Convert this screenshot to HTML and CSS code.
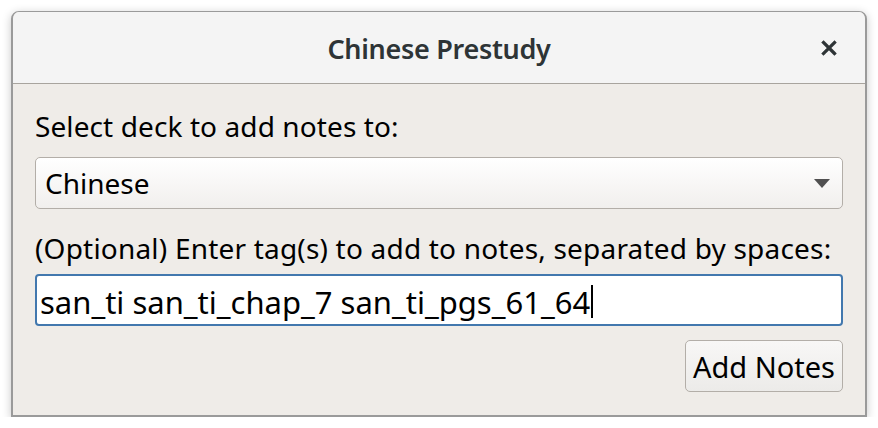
FILE: index.html
```html
<!DOCTYPE html>
<html>
<head>
<meta charset="utf-8">
<link rel="stylesheet" href="styles.css">
</head>
<body>
<div class="window">
  <div class="titlebar">
    <span class="title">Chinese Prestudy</span>
    <span class="close">
      <svg width="16" height="16" viewBox="0 0 16 16"><path d="M2.5 2.5 L13.5 13.5 M13.5 2.5 L2.5 13.5" stroke="#2e3436" stroke-width="3.2" stroke-linecap="square" fill="none"/></svg>
    </span>
  </div>
  <div class="content">
    <div class="label">Select deck to add notes to:</div>
    <div class="combo">
      <span class="combo-text">Chinese</span>
      <svg class="arrow" width="16" height="9" viewBox="0 0 16 9"><path d="M0 0 L16 0 L8 9 Z" fill="#505050"/></svg>
    </div>
    <div class="label label2">(Optional) Enter tag(s) to add to notes, separated by spaces:</div>
    <div class="entry"><span class="entry-text">san_ti san_ti_chap_7 san_ti_pgs_61_64</span><span class="cursor"></span></div>
    <div class="actions">
      <div class="button">Add Notes</div>
    </div>
  </div>
</div>
</body>
</html>
```

FILE: styles.css
```css
html, body {
  margin: 0;
  padding: 0;
  background: #ffffff;
}
body {
  padding: 11px 0 0 11px;
  font-family: "Noto Sans", "DejaVu Sans", sans-serif;
}
.window {
  width: 852px;
  height: 403px;
  border: 1px solid #9a9a9a;
  border-left-width: 2px;
  border-right-width: 2px;
  border-bottom-width: 2px;
  border-radius: 8px 8px 0 0;
  box-shadow: 0 2px 10px rgba(0,0,0,0.22);
  background: #efece8;
  display: flex;
  flex-direction: column;
  overflow: hidden;
}
.titlebar {
  height: 71px;
  background: #f4f4f4;
  border-bottom: 1px solid #a8a49e;
  display: flex;
  align-items: center;
  justify-content: center;
  position: relative;
  flex: none;
}
.title {
  font-family: "Noto Sans", sans-serif;
  font-weight: 600;
  font-size: 27px;
  color: #2e3436;
  letter-spacing: -0.3px;
  margin-top: 2px;
}
.close {
  position: absolute;
  right: 28px;
  top: 28px;
  width: 16px;
  height: 16px;
  display: flex;
}
.content {
  padding: 24px 22px 0 22px;
  display: flex;
  flex-direction: column;
}
.label {
  font-size: 28px;
  line-height: 36px;
  color: #000;
  height: 36px;
  letter-spacing: 0.1px;
}
.combo {
  margin-top: 13px;
  height: 50px;
  border: 1px solid #b3aea8;
  border-radius: 5px;
  background: linear-gradient(#ffffff, #f1efed);
  display: flex;
  align-items: center;
  padding: 0 12px 0 9px;
}
.combo-text {
  flex: 1;
  font-size: 28px;
  color: #000;
}
.arrow {
  display: block;
}
.label2 {
  margin-top: 21px;
  letter-spacing: 0.2px;
}
.entry {
  margin-top: 8px;
  height: 48px;
  border: 2px solid #4278ae;
  border-radius: 4px;
  background: #fff;
  display: flex;
  align-items: center;
  padding: 0 3px;
}
.entry-text {
  font-size: 31px;
  line-height: 40px;
  color: #000;
  margin-top: 4px;
}
.cursor {
  width: 2px;
  height: 33px;
  background: #000;
  margin-left: 1px;
  margin-top: 2px;
}
.actions {
  margin-top: 14px;
  display: flex;
  justify-content: flex-end;
}
.button {
  height: 50px;
  width: 156px;
  border: 1px solid #b3aea8;
  border-radius: 5px;
  background: linear-gradient(#f8f7f6, #ecebe9);
  display: flex;
  align-items: center;
  justify-content: center;
  font-size: 29px;
  color: #000;
}
```
